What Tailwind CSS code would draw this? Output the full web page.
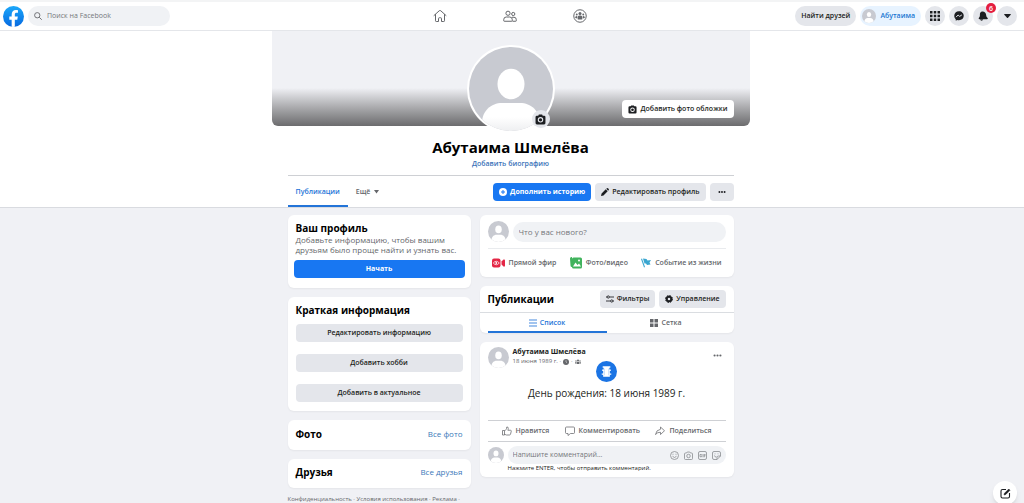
<!DOCTYPE html>
<html lang="ru">
<head>
  <meta charset="UTF-8">
  <meta name="viewport" content="width=device-width, initial-scale=1.0">
  <title>Абутаима Шмелёва | Facebook</title>
  <script src="https://cdn.jsdelivr.net/npm/@tailwindcss/browser@4"></script>
</head>
<body class="bg-[#f0f1f5] font-['Open_Sans','Noto_Sans',sans-serif] text-[8px] leading-[12px] text-[#1c1e21] min-h-screen">

  <!-- Общие значки -->
  <svg class="hidden">
    <symbol id="avatar" viewBox="0 0 40 40">
      <rect width="40" height="40" fill="#c8cad1"/>
      <ellipse cx="20" cy="16" rx="6.200" ry="7.200" fill="#fff"/>
      <path d="M6.500 42v-5c0-7 5-11 9.500-11h8c4.500 0 9.500 4 9.500 11v5z" fill="#fff"/>
    </symbol>
    <symbol id="camera" viewBox="0 0 20 20">
      <path fill-rule="evenodd" fill="currentColor" d="M6 3 7 1h6l1 2h2.500A2.500 2.500 0 0 1 19 5.500v11a2.500 2.500 0 0 1-2.500 2.500h-13A2.500 2.500 0 0 1 1 16.500v-11A2.500 2.500 0 0 1 3.500 3zM10 5.500a5 5 0 1 0 0 10 5 5 0 0 0 0-10zm0 2a3 3 0 1 1 0 6 3 3 0 0 1 0-6z"/>
    </symbol>
    <symbol id="dots" viewBox="0 0 20 20">
      <g fill="currentColor"><circle cx="3.500" cy="10" r="2.400"/><circle cx="10" cy="10" r="2.400"/><circle cx="16.500" cy="10" r="2.400"/></g>
    </symbol>
  </svg>

  <!-- Шапка -->
  <header class="grid grid-cols-[1fr_auto_1fr] items-center h-[31px] pl-[3px] pr-[7px] bg-white border-t-2 border-b border-t-[#f3f4f5] border-b-[#e4e6ea]">
    <div class="flex items-center gap-1">
      <a href="#" aria-label="Facebook" class="shrink-0">
        <svg class="size-[21px]" viewBox="0 0 40 40">
          <defs><linearGradient id="fb" x1="0" y1="0" x2="0" y2="1"><stop offset="0" stop-color="#1ca8fa"/><stop offset="1" stop-color="#0668e0"/></linearGradient></defs>
          <circle cx="20" cy="20" r="20" fill="url(#fb)"/>
          <path d="M16.500 39.700V26H12v-6h4.500v-3.500c0-6 3-9 8-9 1.500 0 3 .2 4 .5v5h-2.500c-2.500 0-3.500 1.300-3.500 3.500V20h5.700l-1 6h-4.700v13.700a20 20 0 0 1-6 0z" fill="#fff"/>
        </svg>
      </a>
      <label class="flex items-center gap-[5px] w-[142px] h-5 px-[6px] rounded-full bg-[#f0f2f5] text-[#65676b]">
        <svg class="size-[8px] shrink-0" viewBox="0 0 16 16" fill="none" stroke="currentColor" stroke-width="1.800"><circle cx="6.500" cy="6.500" r="5.300"/><path d="m10.500 10.500 5 5"/></svg>
        <input type="search" aria-label="Поиск" placeholder="Поиск на Facebook" class="w-full min-w-0 bg-transparent outline-none text-[7px] placeholder:text-[#75777b]">
      </label>
    </div>
    <nav class="flex items-center gap-14 text-[#65676b]">
      <a href="#" aria-label="Главная"><svg class="size-[14px]" viewBox="0 0 28 28" fill="none" stroke="currentColor" stroke-width="2" stroke-linejoin="round" stroke-linecap="round"><path d="M2 13 12.500 3.500q1.500-1.300 3 0L26 13M5 11v12.500q0 1.500 1.500 1.500H11v-6q0-1.500 1.500-1.500h3q1.500 0 1.500 1.500v6h4.500q1.500 0 1.500-1.500V11"/></svg></a>
      <a href="#" aria-label="Друзья"><svg class="size-[14px]" viewBox="0 0 28 28" fill="none" stroke="currentColor" stroke-width="2" stroke-linejoin="round"><circle cx="10" cy="8.500" r="4.200"/><circle cx="20.500" cy="10" r="3.200"/><path d="M1.500 23.500v-2.500q0-5 5-5h7q5 0 5 5v2.500q0 1-1 1h-15q-1 0-1-1zM19 24.500h6.500q1 0 1-1V21q0-4.500-4.500-4.500h-4"/></svg></a>
      <a href="#" aria-label="Группы"><svg class="size-[14px]" viewBox="0 0 28 28" fill="currentColor"><circle cx="14" cy="14" r="12.500" fill="none" stroke="currentColor" stroke-width="2"/><circle cx="14" cy="9" r="3"/><circle cx="7.500" cy="11" r="1.900"/><circle cx="20.500" cy="11" r="1.900"/><path d="M9.500 21v-4.500q0-3.500 3-3.500h3q3 0 3 3.500V21zM4.500 18v-1.500q0-2.500 4-2.500v5zM23.500 18v-1.500q0-2.500-4-2.500v5z"/></svg></a>
    </nav>
    <div class="flex items-center justify-end gap-1">
      <button class="h-5 px-[6px] rounded-full bg-[#e4e6eb] text-[7px] font-semibold whitespace-nowrap">Найти друзей</button>
      <a href="#" class="flex items-center gap-1 h-5 pl-[2px] pr-[6px] rounded-full bg-[#e7f3ff] text-[7px] font-semibold text-[#1876d2]">
        <svg class="size-[14px] rounded-full"><use href="#avatar"/></svg>Абутаима
      </a>
      <button aria-label="Меню" class="grid place-items-center size-5 rounded-full bg-[#e4e6eb]"><svg class="size-[10px]" viewBox="0 0 20 20" fill="currentColor"><path d="M0 0h5v5H0zM7.500 0h5v5h-5zM15 0h5v5h-5zM0 7.500h5v5H0zM7.500 7.500h5v5h-5zM15 7.500h5v5h-5zM0 15h5v5H0zM7.500 15h5v5h-5zM15 15h5v5h-5z"/></svg></button>
      <button aria-label="Сообщения" class="grid place-items-center size-5 rounded-full bg-[#e4e6eb]"><svg class="size-[10px]" viewBox="0 0 20 20"><path d="M10 .5C4.500.500.500 4.500.500 9.700c0 2.800 1.200 5.200 3 6.800v3l2.900-1.400c1.100.300 2.300.500 3.600.500 5.500 0 9.500-4 9.500-8.900S15.500.500 10 .500z" fill="currentColor"/><path d="m4.200 12.300 4-4.300 3.200 2.800 4.300-3" fill="none" stroke="#e4e6eb" stroke-width="2"/></svg></button>
      <button aria-label="Уведомления" class="relative grid place-items-center size-5 rounded-full bg-[#e4e6eb]">
        <svg class="size-[10px]" viewBox="0 0 20 20" fill="currentColor"><path d="M8.500 1C5 1.500 3.600 4 3.800 7.500c.2 3-.6 4.300-1.900 5.800-1.200 1.400-.6 3.200 1.400 3.200h14.500c2 0 2.500-1.900 1.100-3.200-1.500-1.400-2.300-2.600-2.600-5.500C15.900 3.500 12.500.500 8.500 1zM4 17a3.300 3 0 0 0 6.400 0z"/></svg>
        <span class="absolute -top-[3px] -right-[3px] grid place-items-center size-[10px] rounded-full bg-[#e41e3f] text-white text-[7px] leading-none font-semibold">6</span>
      </button>
      <button aria-label="Аккаунт" class="grid place-items-center size-5 rounded-full bg-[#e4e6eb]"><svg class="w-[7px] h-1" viewBox="0 0 14 8" fill="currentColor"><path d="M1 0h12q1 .500.400 1.400L8 7.400q-1 1-2 0L.600 1.400Q0 .500 1 0z"/></svg></button>
    </div>
  </header>

  <!-- Профиль -->
  <section class="bg-white pr-[3px] border-b border-[#d9dbe0]">
    <div class="relative w-full max-w-[478px] h-[95px] mx-auto rounded-b-md bg-linear-to-b from-[#f0f1f5] from-60% to-[#6c6c6e]">
      <button class="absolute right-4 bottom-2 flex items-center gap-1 h-[18px] px-[6px] rounded bg-white text-[7px] font-semibold"><svg class="size-[9px]"><use href="#camera"/></svg>Добавить фото обложки</button>
      <div class="absolute left-1/2 top-[14px] -translate-x-1/2 size-[88px] rounded-full bg-white p-[2px]">
        <svg class="size-full rounded-full" viewBox="0 0 84 84">
          <defs><linearGradient id="body" x1="0" y1="0" x2="0" y2="1"><stop offset=".5" stop-color="#fff"/><stop offset="1" stop-color="#eeeff1"/></linearGradient></defs>
          <rect width="84" height="84" fill="#c8cad1"/>
          <ellipse cx="42" cy="37" rx="13.500" ry="15.300" fill="#fff"/>
          <path d="M13 84V76c0-12 9-20 20-20h18c11 0 20 8 20 20v8z" fill="url(#body)"/>
        </svg>
        <button aria-label="Обновить фото" class="absolute right-[5px] bottom-[5px] grid place-items-center size-[18px] rounded-full bg-[#e4e6eb]"><svg class="size-[11px]"><use href="#camera"/></svg></button>
      </div>
    </div>
    <div class="w-full max-w-[446px] mx-auto">
      <div class="pt-[11px] pb-[6px] text-center">
        <h1 class="text-[15px] leading-5 font-bold text-black">Абутаима Шмелёва</h1>
        <a href="#" class="block pt-px text-[7px] leading-[11px] font-semibold text-[#3b73b9]">Добавить биографию</a>
      </div>
      <div class="flex items-center justify-between h-8 border-t border-[#ced0d4]">
        <nav class="flex h-full text-[7px] font-semibold">
          <a href="#" class="flex items-center px-2 pt-[2px] border-b-2 border-[#2374d8] text-[#2374d8]">Публикации</a>
          <a href="#" class="flex items-center gap-1 px-2 text-[#65676b]">Ещё <svg class="w-[5px] h-1" viewBox="0 0 10 8" fill="currentColor"><path d="M0 0h10L5 7z"/></svg></a>
        </nav>
        <div class="flex gap-1 text-[7px] font-semibold">
          <button class="flex items-center gap-[3px] h-[18px] px-[6px] rounded bg-[#1877f2] text-white font-bold"><svg class="size-[8px]" viewBox="0 0 16 16"><circle cx="8" cy="8" r="8" fill="#fff"/><path d="M8 4v8M4 8h8" stroke="#1877f2" stroke-width="2"/></svg>Дополнить историю</button>
          <button class="flex items-center gap-[3px] h-[18px] px-[6px] rounded bg-[#e4e6eb]"><svg class="size-[8px]" viewBox="0 0 16 16" fill="currentColor"><path d="M0 16l1.200-5L9.500 2.700l3.800 3.800L5 14.800zM10.500 1.700 12 .500q1-.8 2 0l1.500 1.500q.8 1 0 2l-1.200 1.500z"/></svg>Редактировать профиль</button>
          <button aria-label="Ещё" class="grid place-items-center h-[18px] w-6 rounded bg-[#e4e6eb]"><svg class="size-[8px]"><use href="#dots"/></svg></button>
        </div>
      </div>
    </div>
  </section>

  <div class="pr-[3px]">
  <main class="grid grid-cols-[183fr_254fr] gap-[9px] items-start w-full max-w-[446px] mx-auto pt-[7px]">
    <!-- Левая колонка -->
    <div class="flex flex-col gap-[9px]">
      <section class="px-[6px] pt-[7px] pb-[10px] rounded-md bg-white shadow-xs">
        <div class="px-[2px]">
          <h2 class="text-[10px] font-bold text-black">Ваш профиль</h2>
          <p class="pt-px pb-[5px] leading-[10px] text-[#65676b]">Добавьте информацию, чтобы вашим друзьям было проще найти и узнать вас.</p>
        </div>
        <button class="block w-full h-[18px] rounded bg-[#1877f2] text-white text-[7px] font-bold">Начать</button>
      </section>
      <section class="flex flex-col px-2 pt-[7px] pb-[9px] rounded-md bg-white shadow-xs text-[7px]">
        <h2 class="pb-2 text-[10px] font-bold text-black">Краткая информация</h2>
        <div class="flex flex-col gap-3 font-semibold">
          <button class="h-[18px] rounded bg-[#e4e6eb]">Редактировать информацию</button>
          <button class="h-[18px] rounded bg-[#e4e6eb]">Добавить хобби</button>
          <button class="h-[18px] rounded bg-[#e4e6eb]">Добавить в актуальное</button>
        </div>
      </section>
      <section class="flex items-center justify-between h-[30px] px-2 pb-[3px] rounded-md bg-white shadow-xs">
        <h2 class="text-[10px] font-bold text-black">Фото</h2>
        <a href="#" class="text-[#3b79b9]">Все фото</a>
      </section>
      <section class="flex items-center justify-between h-[29px] px-2 pb-[3px] rounded-md bg-white shadow-xs">
        <h2 class="text-[10px] font-bold text-black">Друзья</h2>
        <a href="#" class="text-[#3b79b9]">Все друзья</a>
      </section>
      <footer class="-mt-[2px] text-[6px] leading-[8px] text-[#65676b] whitespace-nowrap"><a href="#">Конфиденциальность</a> · <a href="#">Условия использования</a> · <a href="#">Реклама</a> ·</footer>
    </div>

    <!-- Правая колонка -->
    <div class="flex flex-col gap-[9px]">
      <section class="px-2 pt-[6px] rounded-md bg-white shadow-xs">
        <div class="flex items-center gap-1 pb-[6px] border-b border-[#e9ebee]">
          <svg class="size-[21px] shrink-0 rounded-full"><use href="#avatar"/></svg>
          <input type="text" aria-label="Новая публикация" placeholder="Что у вас нового?" class="w-full min-w-0 h-5 px-[6px] rounded-full bg-[#f0f2f5] text-[8px] outline-none placeholder:text-[#75777b]">
        </div>
        <div class="flex items-center justify-between h-7 px-1 text-[7px] font-semibold text-[#65676b]">
          <button class="flex items-center gap-1"><svg class="w-[13px] h-[10px]" viewBox="0 0 26 20"><rect y="1" width="17" height="18" rx="4" fill="#e42645"/><path d="M19 7l4-4q3-1 3 2v10q0 3-3 2l-4-4z" fill="#e42645"/><path d="M2.500 10q6-7 12 0-6 7-12 0z" fill="none" stroke="#fff" stroke-width="1.500"/><circle cx="8.500" cy="10" r="1.800" fill="#fff"/></svg>Прямой эфир</button>
          <button class="flex items-center gap-1"><svg class="size-[12px]" viewBox="0 0 24 24"><path d="M0 3q0-3 3-3h1v20q-3 0-3-3z" fill="#41b35d"/><rect x="4" y="1" width="20" height="22" rx="3" fill="#41b35d"/><path d="M6 19l5-8 4 5 3-3 4 6z" fill="#fff"/><circle cx="18" cy="7" r="2" fill="#fff"/></svg>Фото/видео</button>
          <button class="flex items-center gap-1"><svg class="size-[10px]" viewBox="0 0 20 20"><path d="M0 2l2-1 6 17-2 1z" fill="#3aa6d0"/><path d="M4 1l7 1 2 3 7-1-3 5 2 4-7 1-2-3H7z" fill="#3aa6d0"/></svg>Событие из жизни</button>
        </div>
      </section>

      <section class="rounded-md bg-white shadow-xs">
        <div class="flex items-center justify-between h-[27px] px-2 border-b border-[#dadde1]">
          <h2 class="text-[10px] font-bold text-black">Публикации</h2>
          <div class="flex gap-1 text-[7px] font-semibold">
            <button class="flex items-center gap-[3px] h-[18px] px-[6px] rounded bg-[#e4e6eb]"><svg class="size-[8px]" viewBox="0 0 16 16" fill="none" stroke="currentColor" stroke-width="1.700"><path d="M0 4h2M7 4h9M0 12h9M14 12h2"/><circle cx="4.500" cy="4" r="2.300"/><circle cx="11.500" cy="12" r="2.300"/></svg>Фильтры</button>
            <button class="flex items-center gap-[3px] h-[18px] px-[6px] rounded bg-[#e4e6eb]"><svg class="size-[8px]" viewBox="0 0 16 16"><circle cx="8" cy="8" r="4.500" fill="none" stroke="currentColor" stroke-width="4"/><circle cx="8" cy="8" r="7" fill="none" stroke="currentColor" stroke-width="2" stroke-dasharray="3.200 2.300"/></svg>Управление</button>
          </div>
        </div>
        <div class="grid grid-cols-2 h-5 px-2 text-[7px] font-semibold">
          <a href="#" class="flex items-center justify-center gap-[3px] pt-[2px] border-b-2 border-[#2374d8] text-[#2374d8]"><svg class="size-[8px]" viewBox="0 0 16 16" stroke="currentColor" stroke-width="1.700"><path d="M0 2h16M0 8h16M0 14h16"/></svg>Список</a>
          <a href="#" class="flex items-center justify-center gap-[3px] text-[#65676b]"><svg class="size-[8px]" viewBox="0 0 16 16" fill="currentColor"><path d="M0 0h7v7H0zM9 0h7v7H9zM0 9h7v7H0zM9 9h7v7H9z"/></svg>Сетка</a>
        </div>
      </section>

      <article class="px-2 pt-[5px] pb-1 rounded-md bg-white shadow-xs">
        <div class="flex items-start gap-1">
          <svg class="size-[21px] rounded-full"><use href="#avatar"/></svg>
          <div>
            <h3 class="leading-[10px] text-[7px] font-bold"><a href="#">Абутаима Шмелёва</a></h3>
            <p class="flex items-center gap-[2px] text-[6px] leading-[9px] text-[#65676b]">18 июня 1989 г. ·
              <svg class="size-[6px]" viewBox="0 0 12 12"><circle cx="6" cy="6" r="6" fill="currentColor"/><path d="M6 2.500V6l2 1.500" stroke="#fff" fill="none"/></svg> ·
              <svg class="size-[6px]" viewBox="0 0 12 12" fill="currentColor"><circle cx="6" cy="3" r="2"/><circle cx="2" cy="4" r="1.400"/><circle cx="10" cy="4" r="1.400"/><path d="M3.500 10V7.500q0-2 2.500-2t2.500 2V10zM0 9V7.500Q0 6 2.800 6v3zM12 9V7.500Q12 6 9.200 6v3z"/></svg>
            </p>
          </div>
          <button aria-label="Действия" class="ml-auto mt-1 mr-1 text-[#65676b]"><svg class="block size-[9px]"><use href="#dots"/></svg></button>
        </div>
        <div class="flex flex-col items-center gap-1 -mt-[7px] pb-5">
          <svg class="size-[21px]" viewBox="0 0 44 44"><circle cx="22" cy="22" r="22" fill="#1b74e4"/><path d="M14 11h16v3h-2v4h3v3h-2v5h3v3h-3v4H15v-4h-3v-3h3v-5h-2v-3h3v-4h-2z" fill="#fff"/><path d="M17.500 16v14M26.500 16v14" stroke="#8dbaf2" stroke-width="1"/></svg>
          <p class="text-[10px] leading-[14px]">День рождения: 18 июня 1989 г.</p>
        </div>
        <div class="flex items-center justify-between h-[22px] px-[14px] border-y border-[#ced0d4] text-[7px] font-semibold text-[#65676b]">
          <button class="flex items-center gap-1"><svg class="size-[10px]" viewBox="0 0 20 20" fill="none" stroke="currentColor" stroke-width="1.500" stroke-linejoin="round"><path d="M1 9h4v9H1zM5 10l3-3q1.500-2 1.500-5 3-1 3 3 0 2-.8 3.500H17q2 .3 1.500 2L17 16.500q-.5 1.500-2 1.500H9l-4-1.500"/></svg>Нравится</button>
          <button class="flex items-center gap-1"><svg class="size-[10px]" viewBox="0 0 20 20" fill="none" stroke="currentColor" stroke-width="1.500" stroke-linejoin="round"><path d="M3 2h14q2 0 2 2v9q0 2-2 2h-6l-5 4v-4H3q-2 0-2-2V4q0-2 2-2z"/></svg>Комментировать</button>
          <button class="flex items-center gap-1"><svg class="size-[10px]" viewBox="0 0 20 20" fill="none" stroke="currentColor" stroke-width="1.500" stroke-linejoin="round"><path d="M11 2l8 7.500-8 7.500v-4.500q-6-.5-10 4.500 1-9 10-10.500z"/></svg>Поделиться</button>
        </div>
        <form class="flex items-center gap-1 pt-1">
          <svg class="size-4 shrink-0 rounded-full"><use href="#avatar"/></svg>
          <div class="flex items-center gap-[5px] grow h-[18px] px-[5px] rounded-full bg-[#f0f2f5] text-[#8a8d91]">
            <input type="text" aria-label="Комментарий" placeholder="Напишите комментарий..." class="w-full min-w-0 bg-transparent outline-none text-[7px] placeholder:text-[#75777b]">
            <button type="button" aria-label="Эмодзи"><svg class="block size-[9px]" viewBox="0 0 18 18" fill="none" stroke="currentColor" stroke-width="1.600"><circle cx="9" cy="9" r="8"/><path d="M5 10.500q4 5 8 0M6 5.500v2M12 5.500v2"/></svg></button>
            <button type="button" aria-label="Фото"><svg class="block size-[9px]" viewBox="0 0 18 18" fill="none" stroke="currentColor" stroke-width="1.600"><path d="M3 4h2l1.500-2h5L13 4h2q2 0 2 2v9q0 2-2 2H3q-2 0-2-2V6q0-2 2-2z"/><circle cx="9" cy="10" r="3.500"/></svg></button>
            <button type="button" aria-label="GIF"><svg class="block size-[9px]" viewBox="0 0 18 18" fill="none" stroke="currentColor" stroke-width="1.600"><rect x="1" y="1" width="16" height="16" rx="3"/><path d="M7.500 7H4v4.500h3V9M10 6v6.500M15 7h-2.500v5.500M12.500 9.500H15"/></svg></button>
            <button type="button" aria-label="Стикер"><svg class="block size-[9px]" viewBox="0 0 18 18" fill="none" stroke="currentColor" stroke-width="1.600"><path d="M4 1h10q3 0 3 3v6l-7 7H4q-3 0-3-3V4q0-3 3-3zM17 10h-4q-3 0-3 3v4M5 9q1 4 4 3M6 5v1.500M12 5v1.500"/></svg></button>
          </div>
        </form>
        <p class="pl-5 text-[6px] leading-[9px]">Нажмите ENTER, чтобы отправить комментарий.</p>
      </article>
    </div>
  </main>
  </div>

  <!-- Новое сообщение -->
  <button aria-label="Новое сообщение" class="fixed right-[7px] -bottom-[2px] grid place-items-center size-6 rounded-full bg-white shadow-md"><svg class="size-[11px]" viewBox="0 0 22 22" fill="none" stroke="currentColor" stroke-width="2.200"><path d="M12 3H5Q2 3 2 6v11q0 3 3 3h11q3 0 3-3v-7"/><path d="m8 14 1-3.500L17.500 2l2.500 2.500L11.500 13z" fill="currentColor" stroke-width="1"/></svg></button>
</body>
</html>
